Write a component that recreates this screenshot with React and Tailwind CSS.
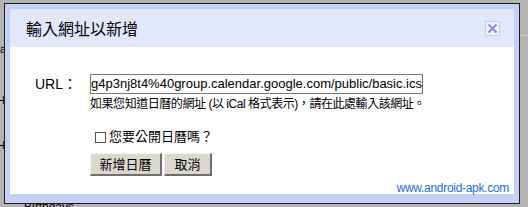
import React from "react";

export default function App() {
  const sans = { fontFamily: '"Liberation Sans", "Noto Sans CJK TC", sans-serif' };
  return (
    <div className="relative w-[528px] h-[207px] overflow-hidden bg-[#b4b4b4]" style={sans}>
      <div className="absolute left-[24px] top-[201px] text-[12px] text-black leading-none">Birthdays</div>
      <div className="absolute left-0 top-[44px] text-[11px] text-black leading-none">a</div>
      <div className="absolute left-[-3px] top-[140px] text-[11px] text-black leading-none">H</div>
      <div className="absolute left-[-3px] top-[95px] text-[11px] text-black leading-none">H</div>
      <div className="absolute left-[520px] top-[35px] w-[8px] h-px bg-[#d0d0d0]" />
      <div className="pl-[4px] pt-[3px]">
        <div className="relative w-[516px] h-[201px] border border-[#1e1e1e] bg-[#c5d0f7] p-[5px] pb-[9px]">
          <div className="flex flex-col h-full bg-white">
            <div className="flex items-center justify-between h-[38px] bg-[#e3e7fb] pl-[16px] pr-[14px]">
              <span className="text-[16px] text-black" style={{ fontFamily: '"Noto Sans CJK TC", sans-serif' }}>輸入網址以新增</span>
              <div className="flex items-center justify-center w-[15px] h-[15px] border border-[#c9cde6] bg-[#eef0fc]">
                <svg width="11" height="11" viewBox="0 0 11 11">
                  <path d="M1.5 1.5 L9.5 9.5 M9.5 1.5 L1.5 9.5" stroke="#7f93c2" strokeWidth="2" />
                </svg>
              </div>
            </div>
            <div className="flex flex-col pt-[27px] pl-[25px]">
              <div className="flex items-center">
                <span className="w-[55px] text-[14px] text-black leading-none">URL：</span>
                <div className="w-[333px] h-[20px] border border-[#7a7a7a] flex items-center overflow-hidden">
                  <span className="text-[13px] text-black whitespace-nowrap tracking-[0px]">g4p3nj8t4%40group.calendar.google.com/public/basic.ics</span>
                </div>
              </div>
              <div className="pl-[55px] mt-[2px] text-[12px] leading-[16px] text-black whitespace-nowrap tracking-[-0.45px]">如果您知道日曆的網址 (以 iCal 格式表示)，請在此處輸入該網址。</div>
              <div className="pl-[60px] mt-[17px] flex items-center">
                <div className="w-[11px] h-[11px] border border-[#555] bg-white" />
                <span className="ml-[3px] text-[13px] leading-[16px] text-black">您要公開日曆嗎？</span>
              </div>
              <div className="pl-[55px] mt-[8px] flex gap-[2px]">
                <button className="w-[72px] h-[23px] bg-[#dbd8d0] border-t border-l border-t-[#f4f4f4] border-l-[#f4f4f4] border-r-2 border-b-2 border-r-[#6e6e6e] border-b-[#6e6e6e] text-[13px] text-black leading-none">新增日曆</button>
                <button className="w-[48px] h-[23px] bg-[#dbd8d0] border-t border-l border-t-[#f4f4f4] border-l-[#f4f4f4] border-r-2 border-b-2 border-r-[#6e6e6e] border-b-[#6e6e6e] text-[13px] text-black leading-none">取消</button>
              </div>
            </div>
            <div className="mt-auto flex justify-end pr-[5px] pb-0">
              <span className="text-[12px] text-[#1f6fd6] leading-none tracking-[-0.3px]">www.android-apk.com</span>
            </div>
          </div>
        </div>
      </div>
    </div>
  );
}
